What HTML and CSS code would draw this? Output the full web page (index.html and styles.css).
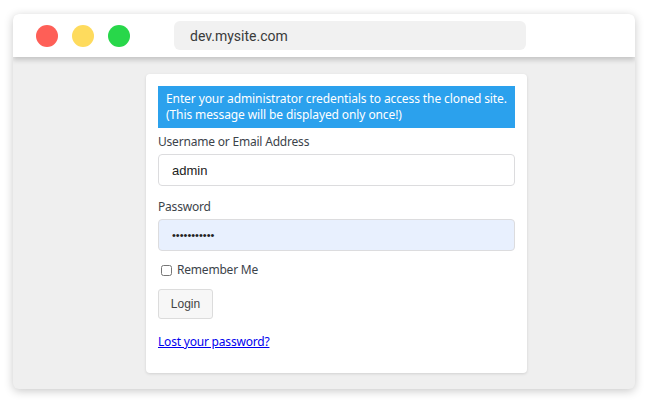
FILE: index.html
```html
<!DOCTYPE html>
<html>
<head>
<meta charset="utf-8">
<link rel="stylesheet" href="styles.css">
</head>
<body>
<div class="window">
  <div class="titlebar">
    <span class="dot red"></span>
    <span class="dot yellow"></span>
    <span class="dot green"></span>
    <div class="url">dev.mysite.com</div>
  </div>
  <div class="content">
    <form class="card">
      <div class="notice">Enter your administrator credentials to access the cloned site.<br>(This message will be displayed only once!)</div>
      <label class="label">Username or Email Address</label>
      <input class="field" type="text" value="admin">
      <label class="label pw">Password</label>
      <input class="field filled" type="password" value="abcdefghijk">
      <label class="remember"><input type="checkbox" class="check"> Remember Me</label>
      <div class="btnrow"><button type="button" class="btn">Login</button></div>
      <a class="lost" href="#">Lost your password?</a>
    </form>
  </div>
</div>
</body>
</html>
```
FILE: styles.css
```css
html, body { margin: 0; padding: 0; background: #fff; }
body { width: 650px; height: 403px; overflow: hidden; }
.window {
  margin: 14px 0 0 13px;
  width: 622px;
  height: 375px;
  border-radius: 6px;
  overflow: hidden;
  box-shadow: 0 2px 10px rgba(0,0,0,0.22);
  background: #efefef;
}
.titlebar {
  position: relative;
  z-index: 1;
  height: 43px;
  background: #fff;
  display: flex;
  align-items: center;
  padding-left: 23px;
  box-shadow: 0 3px 5px rgba(0,0,0,0.18);
}
.dot { width: 22px; height: 22px; border-radius: 50%; margin-right: 14px; flex: none; }
.red { background: #fe5f57; }
.yellow { background: #fedb5d; }
.green { background: #28d74a; }
.url {
  margin-left: 30px;
  width: 352px;
  height: 29px;
  border-radius: 6px;
  background: #f1f1f1;
  box-sizing: border-box;
  padding-left: 16px;
  display: flex;
  align-items: center;
  font-family: Roboto, "Liberation Sans", sans-serif;
  font-size: 14px;
  color: #3a3a3a;
}
.content { padding-top: 17px; }
.card {
  display: flex;
  flex-direction: column;
  width: 381px;
  box-sizing: border-box;
  margin: 0 0 0 133px;
  background: #fff;
  border-radius: 4px;
  box-shadow: 0 1px 3px rgba(0,0,0,0.13);
  padding: 12px 12px 21px 12px;
  font-family: "Noto Sans", "Open Sans", sans-serif;
  font-size: 12px;
  letter-spacing: -0.2px;
  color: #3c434a;
}
.notice {
  background: #2ba1ed;
  color: #fff;
  padding: 5px 8px;
  line-height: 16px;
  white-space: nowrap;
  letter-spacing: -0.1px;
}
.label { display: block; line-height: 20px; margin-top: 4px; }
.label.pw { margin-top: 11px; }
.field {
  margin-top: 2px;
  height: 32px;
  box-sizing: border-box;
  border: 1px solid #dcdcde;
  border-radius: 4px;
  padding: 0 13px;
  font-family: "Liberation Sans", Arial, sans-serif;
  font-size: 13px;
  letter-spacing: 0;
  color: #222;
  background: #fff;
  outline: none;
}
.field.filled { background: #e8f0fe; font-size: 11px; }
.remember { display: flex; align-items: center; margin-top: 9px; line-height: 20px; }
.check { margin: 0 5px 0 3px; width: 11px; height: 11px; }
.btnrow { margin-top: 9px; }
.btn {
  width: 55px;
  height: 30px;
  background: #f7f7f7;
  border: 1px solid #dcdcdc;
  border-radius: 3px;
  font-family: "Liberation Sans", Arial, sans-serif;
  font-size: 12px;
  color: #444;
  padding: 0;
}
.lost {
  margin-top: 13px;
  line-height: 20px;
  color: #0000ee;
  text-decoration: underline;
  align-self: flex-start;
}
```
